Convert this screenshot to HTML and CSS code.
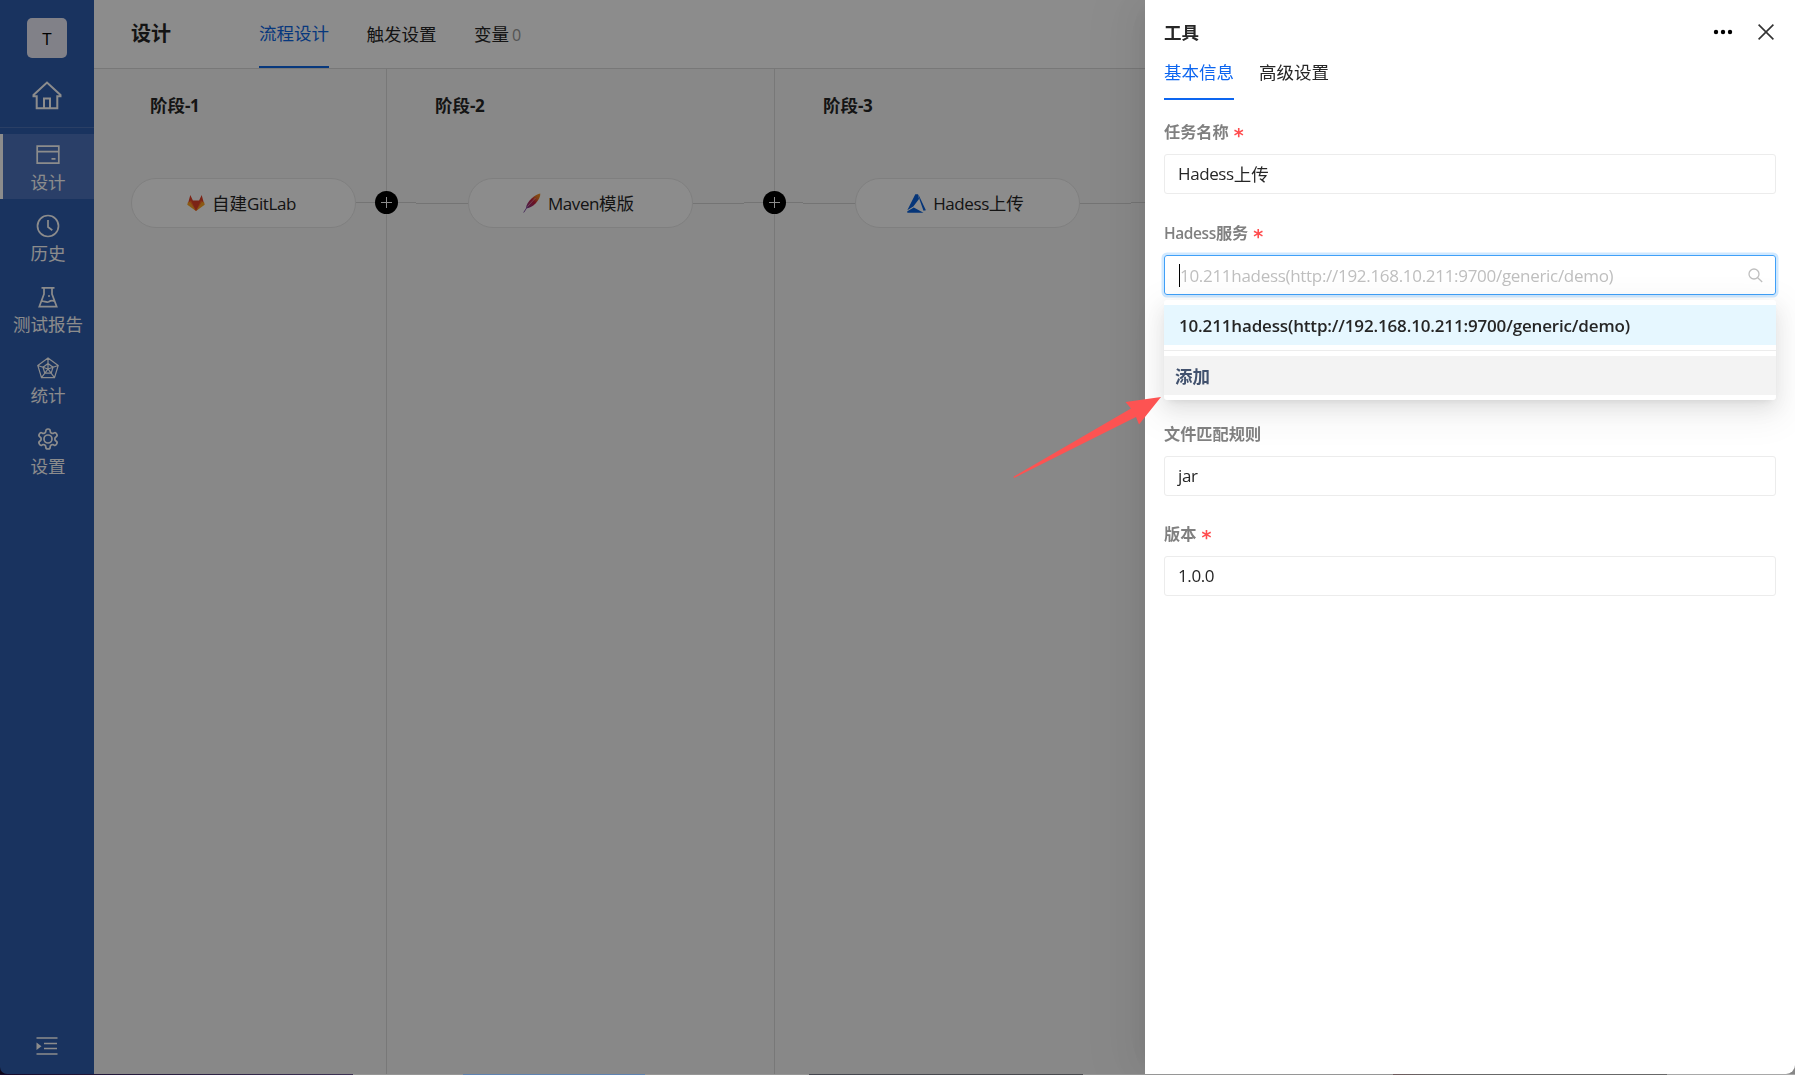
FILE: index.html
```html
<!DOCTYPE html>
<html lang="zh-CN">
<head>
<meta charset="utf-8">
<meta name="viewport" content="width=device-width, initial-scale=1">
<title>设计</title>
<link rel="stylesheet" href="styles.css">
</head>
<body>

<div class="app">
  <div class="sidebar">
    <div class="avatar">T</div>
    <svg class="home" width="32" height="32" viewBox="0 0 32 32"><path d="M2.5 16.3V15L16 2.500L29.500 15v1.300H26.300V28.300H5.700V16.300Z M13 28V18.500h6V28"/></svg>
    <div class="menu">
      <div class="menu-item active">
        <svg width="24" height="24" viewBox="0 0 24 24"><path d="M1.200 3.200h21.600v17H1.200z M1.200 8.700h21.600 M15.500 15.800h4"/></svg>
        <span>设计</span>
      </div>
      <div class="menu-item">
        <svg width="24" height="24" viewBox="0 0 24 24"><circle cx="12" cy="12" r="10.500"/><path d="M12 6v7l4.300 3.200"/></svg>
        <span>历史</span>
      </div>
      <div class="menu-item">
        <svg width="24" height="24" viewBox="0 0 24 24"><path d="M5.500 2.800h13 M8 3v6L3.300 21.700h17.400L16 9V3 M5.300 16.500c3-1.200 4.500 1.600 7.500.3c2-1.500 3.500-1.500 5.700-.7"/><circle class="dot" cx="13" cy="11" r="1"/></svg>
        <span>测试报告</span>
      </div>
      <div class="menu-item">
        <svg class="thin" width="24" height="24" viewBox="0 0 24 24"><path d="M12 2L22.200 9.500L18.500 21.700H5.500L1.800 9.500Z M12 7.500L17 11.200L15.200 17.200H8.800L7 11.200Z M12 2v11 M22.200 9.500L12 13 M1.800 9.500L12 13 M18.500 21.700L12 13L5.500 21.700"/></svg>
        <span>统计</span>
      </div>
      <div class="menu-item">
        <svg width="24" height="24" viewBox="0 0 24 24"><path d="M12.220 2h-.44a2 2 0 0 0-2 2v.18a2 2 0 0 1-1 1.730l-.43.25a2 2 0 0 1-2 0l-.15-.08a2 2 0 0 0-2.730.73l-.22.38a2 2 0 0 0 .73 2.730l.15.1a2 2 0 0 1 1 1.720v.51a2 2 0 0 1-1 1.740l-.15.09a2 2 0 0 0-.73 2.730l.22.38a2 2 0 0 0 2.730.73l.15-.08a2 2 0 0 1 2 0l.43.25a2 2 0 0 1 1 1.730V20a2 2 0 0 0 2 2h.44a2 2 0 0 0 2-2v-.18a2 2 0 0 1 1-1.730l.43-.25a2 2 0 0 1 2 0l.15.08a2 2 0 0 0 2.730-.73l.22-.39a2 2 0 0 0-.73-2.730l-.15-.08a2 2 0 0 1-1-1.740v-.5a2 2 0 0 1 1-1.740l.15-.09a2 2 0 0 0 .73-2.730l-.22-.38a2 2 0 0 0-2.730-.73l-.15.08a2 2 0 0 1-2 0l-.43-.25a2 2 0 0 1-1-1.730V4a2 2 0 0 0-2-2z"/><circle cx="12" cy="12" r="4"/></svg>
        <span>设置</span>
      </div>
    </div>
    <svg class="fold" width="22" height="20" viewBox="0 0 22 20"><path d="M.5 2h21 M8 7.500h13 M8 12.500h13 M.5 18h21"/><path class="tri" d="M.5 6.500L5.500 10.200L.5 14z"/></svg>
  </div>

  <div class="main">
    <div class="header">
      <div class="header-title">设计</div>
      <div class="tabs">
        <div class="tab active">流程设计</div>
        <div class="tab">触发设置</div>
        <div class="tab">变量<span class="count">0</span></div>
      </div>
    </div>
    <div class="canvas">
      <div class="stage first">
        <div class="stage-name">阶段<span class="en">-1</span></div>
        <div class="flow">
          <div class="node">
            <svg width="18" height="18" viewBox="0 0 18 18"><path fill="#e24329" d="M3.300 1L1 9.500L9 17l8-7.500L14.700 1l-2.600 5.500H5.900z"/><path fill="#fc6d26" d="M.8 8.800L4 6.600L9 17z M17.200 8.800L14 6.600L9 17z"/><path fill="#fca326" d="M.8 8.500L.3 10.800L9 17L3 8z M17.200 8.500l.5 2.300L9 17l6-9z"/></svg>
            <span>自建<span class="en">GitLab</span></span>
          </div>
          <div class="line up grow"></div>
        </div>
        <div class="plus"></div>
      </div>
      <div class="stage">
        <div class="stage-name">阶段<span class="en">-2</span></div>
        <div class="flow">
          <div class="line up side"></div>
          <div class="line mid"></div>
          <div class="node">
            <svg width="18" height="20" viewBox="0 0 18 20"><defs><linearGradient id="feather" x1="1" y1="0" x2="0" y2="1"><stop offset="0" stop-color="#f69923"/><stop offset=".25" stop-color="#e97826"/><stop offset=".5" stop-color="#c7213f"/><stop offset="1" stop-color="#7b3a96"/></linearGradient></defs><path fill="url(#feather)" d="M17.300.5C13 .8 3 8.500 3 15.500C9 15.500 17.800 7 17.300.5z"/><path fill="none" stroke="#8a5aa8" d="M.7 19.500L4.500 13.500"/><path fill="none" stroke="#e6a0b0" stroke-width=".7" d="M4.500 13.500L12.500 5"/></svg>
            <span><span class="en">Maven</span>模版</span>
          </div>
          <div class="line mid"></div>
          <div class="line up grow"></div>
        </div>
        <div class="plus"></div>
      </div>
      <div class="stage last">
        <div class="stage-name">阶段<span class="en">-3</span></div>
        <div class="flow">
          <div class="line up side"></div>
          <div class="line mid"></div>
          <div class="node">
            <svg width="19" height="19" viewBox="0 0 19 19"><path fill="#0a62dc" d="M8.300.3H11L12 5L6.300 12.600L.3 16.300z M11.300.3L18.900 16.200L16.500 16.700L12.600 5.800z M.3 17.200L6.800 13.500L16.500 18.800H.3z"/></svg>
            <span><span class="en">Hadess</span>上传</span>
          </div>
          <div class="line mid"></div>
          <div class="line up grow"></div>
        </div>
      </div>
    </div>
  </div>
</div>

<div class="mask"></div>

<div class="drawer">
  <div class="drawer-head">
    <div class="drawer-title">工具</div>
    <svg class="more" width="20" height="6" viewBox="0 0 20 6"><circle cx="3" cy="3" r="2.200"/><circle cx="10" cy="3" r="2.200"/><circle cx="17" cy="3" r="2.200"/></svg>
    <svg class="close" width="16" height="16" viewBox="0 0 16 16"><path d="M.6.6L15.400 15.400M15.400.6L.6 15.400"/></svg>
  </div>
  <div class="drawer-tabs">
    <div class="drawer-tab active">基本信息</div>
    <div class="drawer-tab">高级设置</div>
  </div>
  <div class="form">
    <div class="field">
      <div class="label">任务名称<i>*</i></div>
      <div class="input"><span class="en">Hadess</span>上传</div>
    </div>
    <div class="field select">
      <div class="label"><span class="en">Hadess</span>服务<i>*</i></div>
      <div class="input focus">
        <span class="placeholder">10.211hadess(http://192.168.10.211:9700/generic/demo)</span>
        <svg width="15" height="15" viewBox="0 0 15 15"><circle cx="6" cy="6" r="5"/><path d="M9.700 9.700l4.500 4.300"/></svg>
      </div>
      <div class="dropdown">
        <div class="option">10.211hadess(http://192.168.10.211:9700/generic/demo)</div>
        <div class="divider"></div>
        <div class="option-add">添加</div>
      </div>
    </div>
    <div class="field">
      <div class="label">文件匹配规则</div>
      <div class="input"><span class="en">jar</span></div>
    </div>
    <div class="field">
      <div class="label">版本<i>*</i></div>
      <div class="input"><span class="en">1.0.0</span></div>
    </div>
  </div>
</div>

<svg class="arrow" width="150" height="84" viewBox="0 0 150 84"><path d="M149 1L113.500 6L119 12.500L1.500 80.700L2 82L124 21L127 28.500Z"/></svg>

<div class="desktop-edge"></div>
</body>
</html>
```
FILE: styles.css
```css
* {box-sizing: border-box;}

body {
  margin: 0;
  height: 1075px;
  overflow: hidden;
  background: #160b2c;
  font-family: "Open Sans", "Noto Sans CJK SC", sans-serif;
  font-size: 17.5px;
  line-height: 26px;
  color: #262626;
}

svg {
  display: block;
  flex: none;
}

.en {
  font-size: 17px;
  letter-spacing: -0.4px;
}

.app {
  display: flex;
  height: 1074px;
  border-bottom-left-radius: 7px;
  overflow: hidden;
}

/* Sidebar */
.sidebar {
  width: 94px;
  flex: none;
  display: flex;
  flex-direction: column;
  align-items: center;
  background: #2f5dad;
  color: #fff;
}

.sidebar svg {
  fill: none;
  stroke: #fff;
  stroke-width: 1.7;
}

.avatar {
  width: 40px;
  height: 40px;
  margin-top: 18px;
  border-radius: 5px;
  background: #ebebf8;
  color: #000;
  text-align: center;
  line-height: 41px;
  font-size: 17px;
}

.sidebar .home {
  margin-top: 22px;
  stroke-width: 2;
}

.menu {
  width: 100%;
  margin-top: 15px;
  padding-top: 6px;
  border-top: 1px solid #4e74b8;
  display: flex;
  flex-direction: column;
  gap: 6px;
}

.menu-item {
  height: 65px;
  padding: 9px 1px 0 0;
  border-left: 3px solid transparent;
  display: flex;
  flex-direction: column;
  align-items: center;
  gap: 2px;
}

.menu-item.active {
  background: #4e74bd;
  border-left-color: #fff;
}

.menu-item .thin {stroke-width: 1.2;}
.menu-item .dot {fill: #fff; stroke: none;}

.sidebar .fold {
  margin-top: auto;
  margin-bottom: 18px;
}

.fold .tri {
  fill: #fff;
  stroke: none;
}

/* Main area */
.main {
  flex: 1;
  display: flex;
  flex-direction: column;
  background: #f7f7f7;
}

.header {
  height: 69px;
  padding-left: 37px;
  display: flex;
  align-items: center;
  background: #fff;
  border-bottom: 1px solid #dadada;
}

.header-title {
  width: 128px;
  font-size: 20px;
  font-weight: bold;
}

.tabs {
  display: flex;
  gap: 37.5px;
  height: 68px;
}

.tab {line-height: 69px;}

.tab.active {
  line-height: 67px;
  color: #0d66e4;
  border-bottom: 2px solid #0d66e4;
}

.count {
  margin-left: 3px;
  font-size: 16px;
  color: #999;
}

.canvas {
  flex: 1;
  display: flex;
}

.stage {
  position: relative;
  width: 388px;
  flex: none;
  padding-top: 23px;
  border-right: 1px solid #dadada;
}

.stage.first {width: 293px;}
.stage.last {border-right: none;}

.stage-name {
  padding-left: 48px;
  font-weight: bold;
}

.stage.first .stage-name {padding-left: 56px;}

.flow {
  display: flex;
  align-items: center;
  margin-top: 59px;
}

.stage.first .flow {padding-left: 37px;}

.node {
  width: 225px;
  height: 50px;
  flex: none;
  display: flex;
  align-items: center;
  justify-content: center;
  gap: 7px;
  padding-right: 4px;
  background: #fff;
  border: 1px solid #e8e8e8;
  border-radius: 25px;
}

.line {
  height: 1px;
  background: #d4d4d4;
}

.line.up {margin-top: -2px;}
.line.side {width: 29px;}
.line.mid {width: 51px;}
.line.side + .line.mid {width: 52px;}
.line.grow {flex: 1;}
.stage.last .side {width: 28px;}

/* Round add button, sits on the line between two stages */
.plus {
  position: absolute;
  right: -12px;
  top: 122px;
  width: 23px;
  height: 23px;
  z-index: 1;
  border-radius: 50%;
  background:
    linear-gradient(#fff, #fff) center / 11px 1px no-repeat,
    linear-gradient(#fff, #fff) center / 1px 11px no-repeat,
    #000;
}

.mask {
  position: fixed;
  top: 0;
  right: 0;
  bottom: 1px;
  left: 0;
  z-index: 2;
  background: rgba(0, 0, 0, 0.45);
}

/* Drawer */
.drawer {
  position: fixed;
  top: 0;
  right: 0;
  bottom: 1px;
  z-index: 3;
  width: 650px;
  padding: 0 19px;
  background: #fff;
  border-bottom-right-radius: 9px;
  box-shadow: -7px 0 20px -10px rgba(0, 0, 0, 0.08), -11px 0 35px rgba(0, 0, 0, 0.05), -15px 0 60px 20px rgba(0, 0, 0, 0.03);
}

.drawer-head {
  display: flex;
  align-items: center;
  padding: 19px 2px 0 0;
}

.drawer-title {
  flex: 1;
  font-weight: bold;
}

.more {
  margin-right: 25px;
  fill: #000;
}

.close {
  stroke: #333;
  stroke-width: 1.6;
}

.drawer-tabs {
  display: flex;
  gap: 25px;
}

.drawer-tab {
  height: 55px;
  line-height: 55px;
}

.drawer-tab.active {
  color: #0d66f0;
  border-bottom: 2px solid #0d66f0;
}

.form {padding-top: 19px;}

.field {
  position: relative;
  margin-bottom: 26px;
}

.field.select {margin-bottom: 126px;}
.field.select ~ .field {margin-bottom: 25px;}

.label {
  height: 35px;
  font-size: 16.2px;
  font-weight: bold;
  color: #808080;
}

.label .en {
  font-size: 15.5px;
  font-weight: 600;
}

.label i {
  margin-left: 5px;
  font-family: "DejaVu Sans", sans-serif;
  font-style: normal;
  font-size: 19px;
  line-height: 20px;
  vertical-align: -4px;
  color: #ff4d4f;
}

.input {
  height: 40px;
  padding: 0 13px;
  display: flex;
  align-items: center;
  border: 1px solid #ececec;
  border-radius: 3px;
}

.input.focus {
  padding-left: 14px;
  justify-content: space-between;
  border-color: #40a0f8;
  box-shadow: 0 0 0 2.5px rgba(24, 144, 255, 0.2);
}

.focus svg {
  margin-right: -1px;
  fill: none;
  stroke: #bfbfbf;
  stroke-width: 1.3;
}

.placeholder {
  height: 23px;
  border-left: 1px solid #000;
  font-size: 17px;
  line-height: 23px;
  letter-spacing: -0.3px;
  color: #bfbfbf;
}

.dropdown {
  position: absolute;
  top: 80px;
  left: 0;
  right: 0;
  padding: 5px 0;
  background: #fff;
  border-radius: 3px;
  box-shadow: 0 4px 8px -5px rgba(0, 0, 0, 0.12), 0 8px 20px rgba(0, 0, 0, 0.08), 0 11px 35px 10px rgba(0, 0, 0, 0.05);
}

.option {
  height: 40px;
  padding-left: 15px;
  font-size: 17px;
  font-weight: 600;
  line-height: 41px;
  letter-spacing: -0.16px;
  background: #e6f7ff;
}

.divider {
  height: 1px;
  margin: 5px 0;
  background: #ececec;
}

.option-add {
  height: 39px;
  padding-left: 11px;
  font-weight: bold;
  line-height: 40px;
  color: #42526e;
  background: #f3f3f3;
}

/* Callout arrow over the page */
.arrow {
  position: absolute;
  left: 1012px;
  top: 396px;
  z-index: 4;
  fill: #fd5352;
}

/* Strip of desktop below the window */
.desktop-edge {
  position: absolute;
  left: 0;
  right: 0;
  top: 1074px;
  height: 1px;
  z-index: 4;
  background: linear-gradient(90deg, #160b2c 0, #3e3354 353px, #969696 353px, #969696 463px, #5f82b0 463px, #5f82b0 645px, #969696 645px, #969696 809px, #45464f 809px, #4a4b4f 1083px, #969696 1083px, #969696 1393px, #6e5a5c 1393px, #686868 1436px, #686868 1667px, #a8a8a8 1667px);
}
```
